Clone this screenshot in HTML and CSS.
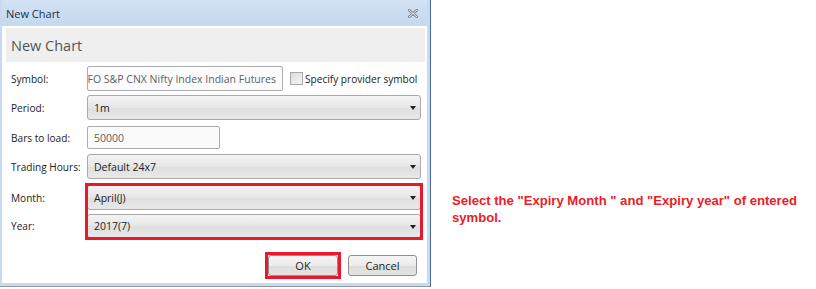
FILE: index.html
```html
<!DOCTYPE html>
<html>
<head>
<meta charset="utf-8">
<link rel="stylesheet" href="styles.css">
</head>
<body>
<div class="page">
  <div class="window">
    <div class="titlebar">
      <span class="title">New Chart</span>
      <svg class="close" width="10" height="9" viewBox="0 0 10 9">
        <path d="M1 1 L9 8 M9 1 L1 8" stroke="#7d8692" stroke-width="2.6" stroke-linecap="round"/>
        <path d="M1 1 L9 8 M9 1 L1 8" stroke="#e9edf2" stroke-width="1" stroke-linecap="round"/>
      </svg>
    </div>
    <div class="client">
      <div class="header">New Chart</div>
      <div class="form">
        <div class="row r-symbol">
          <span class="label">Symbol:</span>
          <div class="input symbol"><span class="clip">NSE FO S&amp;P CNX Nifty Index Indian Futures</span></div>
          <span class="check"></span>
          <span class="checklabel">Specify provider symbol</span>
        </div>
        <div class="row r-period">
          <span class="label">Period:</span>
          <div class="select"><span>1m</span><i class="arrow"></i></div>
        </div>
        <div class="row r-bars">
          <span class="label">Bars to load:</span>
          <div class="input bars">50000</div>
        </div>
        <div class="row r-hours">
          <span class="label">Trading Hours:</span>
          <div class="select"><span>Default 24x7</span><i class="arrow"></i></div>
        </div>
        <div class="group">
          <div class="labels">
            <span class="label l-month">Month:</span>
            <span class="label l-year">Year:</span>
          </div>
          <div class="redbox">
            <div class="select s-month"><span>April(J)</span><i class="arrow"></i></div>
            <div class="select s-year"><span>2017(7)</span><i class="arrow"></i></div>
          </div>
        </div>
        <div class="buttons">
          <div class="okmark"><div class="btn ok">OK</div></div>
          <div class="btn cancel">Cancel</div>
        </div>
      </div>
    </div>
  </div>
  <div class="note">Select the "Expiry Month " and "Expiry year" of entered<br>symbol.</div>
</div>
</body>
</html>
```
FILE: styles.css
```css
html, body {
  margin: 0;
  padding: 0;
  background: #ffffff;
}
.page {
  display: flex;
  width: 816px;
  height: 289px;
  font-family: "Open Sans", "Noto Sans", sans-serif;
}
.window {
  width: 431px;
  height: 287px;
  box-sizing: border-box;
  background: #c8daf0;
  border-right: 1px solid #4a6a96;
  border-bottom: 1px solid #8e969f;
  padding: 0 3px 3px 2px;
  display: flex;
  flex-direction: column;
  flex: none;
}
.titlebar {
  height: 26px;
  display: flex;
  align-items: center;
  justify-content: space-between;
  padding: 0 9px 0 4px;
  background: linear-gradient(#d3e2f4, #c5d8ef);
}
.title {
  font-size: 11px;
  color: #1b2f4d;
}
.close {
  display: block;
}
.client {
  flex: 1;
  background: #ffffff;
  padding: 2px 2px 0 4px;
  display: flex;
  flex-direction: column;
}
.header {
  height: 34px;
  background: #efefef;
  display: flex;
  align-items: center;
  padding-left: 5px;
  font-size: 14.5px;
  color: #555555;
}
.form {
  display: flex;
  flex-direction: column;
  padding: 0 4px 0 5px;
  font-size: 10.1px;
  color: #222222;
}
.row {
  display: flex;
  align-items: center;
}
.label {
  width: 76px;
  flex: none;
}
.r-symbol { margin-top: 4px; height: 25px; }
.r-period { margin-top: 4px; height: 25px; }
.r-bars { margin-top: 6px; height: 23px; }
.r-hours { margin-top: 5px; height: 25px; }
.input {
  box-sizing: border-box;
  height: 100%;
  border: 1px solid #abadb3;
  border-radius: 2px;
  background: #fbfbfb;
  color: #606060;
  display: flex;
  align-items: center;
  padding: 0 6px;
  white-space: nowrap;
  flex: none;
  font-size: 10.5px;
}
.symbol {
  width: 196px;
  overflow: hidden;
  justify-content: flex-end;
}
.clip {
  flex: none;
}
.bars {
  width: 133px;
}
.check {
  flex: none;
  width: 11px;
  height: 11px;
  margin-left: 7px;
  border: 1px solid #a8a8a8;
  background: linear-gradient(135deg, #dcdcdc, #f6f6f6);
  box-sizing: content-box;
}
.checklabel {
  margin-left: 2px;
  white-space: nowrap;
  flex: none;
}
.select {
  flex: 1;
  box-sizing: border-box;
  height: 100%;
  border: 1px solid #a9a9a9;
  border-radius: 3px;
  background: linear-gradient(#f4f4f4, #e6e6e6 50%, #dedede 51%, #e9e9e9);
  display: flex;
  align-items: center;
  justify-content: space-between;
  padding: 0 4px 0 6px;
  color: #1e1e1e;
  font-size: 10.5px;
}
.arrow {
  width: 0;
  height: 0;
  border-left: 3.5px solid transparent;
  border-right: 3.5px solid transparent;
  border-top: 4px solid #202020;
  margin-top: 1px;
}
.group {
  display: flex;
  margin-top: 6px;
}
.labels {
  width: 76px;
  flex: none;
  display: flex;
  flex-direction: column;
}
.l-month { height: 25px; display: flex; align-items: center; }
.l-year { height: 24px; margin-top: 4px; display: flex; align-items: center; }
.redbox {
  flex: 1;
  display: flex;
  flex-direction: column;
  gap: 4px;
  outline: 3px solid #e8192c;
  outline-offset: -1px;
}
.s-month { flex: none; height: 25px; }
.s-year { flex: none; height: 24px; }
.buttons {
  display: flex;
  justify-content: flex-end;
  gap: 10px;
  margin-top: 17px;
  padding-right: 4px;
}
.okmark {
  outline: 3px solid #e8192c;
  outline-offset: 0;
}
.btn {
  height: 21px;
  box-sizing: border-box;
  border: 1px solid #8f8f8f;
  border-radius: 3px;
  background: linear-gradient(#f5f5f5, #ebebeb 50%, #dddddd 51%, #e4e4e4);
  display: flex;
  align-items: center;
  justify-content: center;
  font-size: 11px;
  color: #1e1e1e;
}
.ok {
  width: 70px;
}
.cancel {
  width: 69px;
}
.note {
  margin-left: 21px;
  padding-top: 192px;
  font-family: "Liberation Sans", Arial, sans-serif;
  font-weight: bold;
  font-size: 13.1px;
  line-height: 17px;
  color: #e8202a;
  white-space: nowrap;
}
```
